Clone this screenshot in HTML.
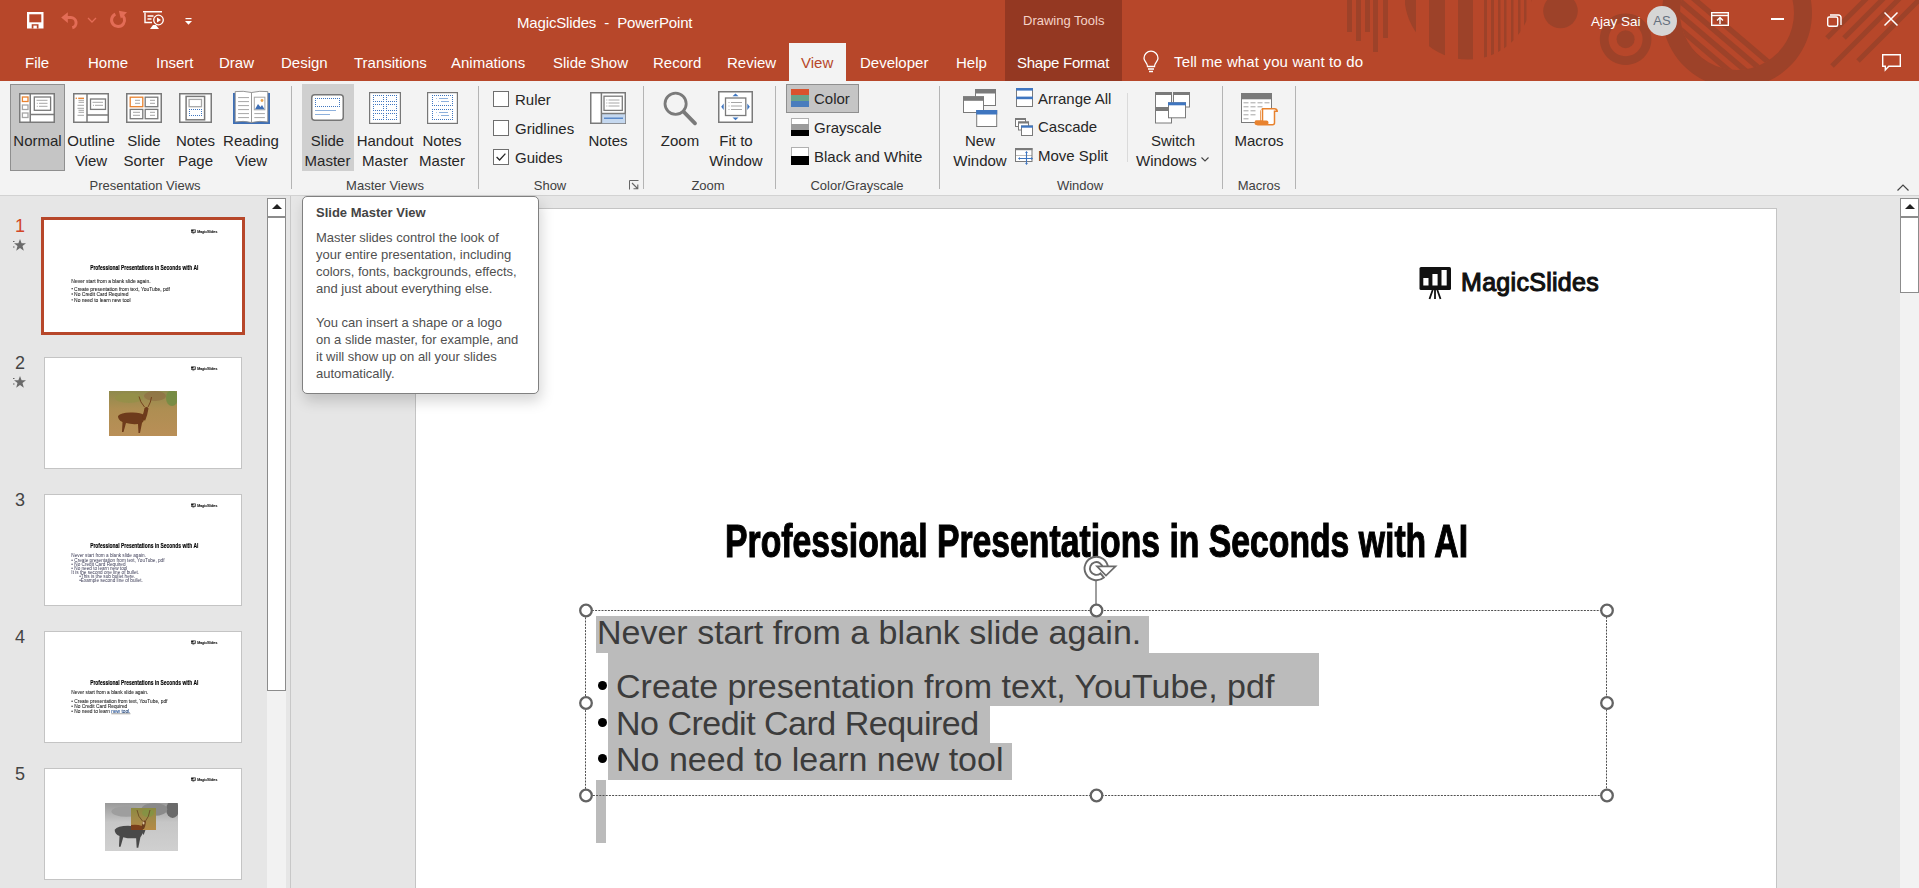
<!DOCTYPE html>
<html><head><meta charset="utf-8">
<style>
*{margin:0;padding:0;box-sizing:border-box}
html,body{width:1919px;height:888px;overflow:hidden;background:#E6E6E6;font-family:"Liberation Sans",sans-serif;position:relative}
.a{position:absolute;white-space:nowrap}
svg{position:absolute;overflow:visible}
#titlebar{position:absolute;left:0;top:0;width:1919px;height:81px;background:#B7472A;overflow:hidden}
.tt{color:#fff;font-size:15px}
.tab{position:absolute;top:53.5px;color:#fff;font-size:15px;white-space:nowrap}
#ribbon{position:absolute;left:0;top:81px;width:1919px;height:115px;background:#F3F3F3;border-bottom:1px solid #D2D2D2}
.rl{position:absolute;color:#262626;font-size:15px;white-space:nowrap;line-height:20px}
.gl{position:absolute;top:95px;color:#444;font-size:13px;white-space:nowrap}
.sep{position:absolute;top:5px;width:1px;height:103px;background:#C6C6C6}
.thumb{position:absolute;left:44px;width:198px;height:112px;background:#fff;border:1px solid #C4C4C4;overflow:hidden}
.num{position:absolute;font-size:18px;color:#444}
</style></head>
<body>
<!-- TITLEBAR -->
<div id="titlebar">
  <svg width="1919" height="81" style="left:0;top:0">
    <g fill="#9D4229">
      <rect x="1347" y="0" width="5" height="32"/>
      <rect x="1356" y="0" width="5" height="41"/>
      <rect x="1365" y="0" width="5" height="32"/>
      <rect x="1373" y="0" width="5" height="52"/>
      <rect x="1383" y="0" width="5" height="38"/>
      <clipPath id="cc"><circle cx="1468" cy="-4" r="63.5"/></clipPath>
      <g clip-path="url(#cc)">
        <rect x="1405" y="0" width="11" height="80"/>
        <rect x="1429" y="0" width="16" height="80"/>
        <rect x="1458" y="0" width="15" height="80"/>
        <rect x="1484" y="0" width="3" height="80"/>
        <rect x="1491" y="0" width="3" height="80"/>
        <rect x="1498" y="0" width="2.5" height="80"/>
        <rect x="1504" y="0" width="2.5" height="80"/>
        <rect x="1511" y="0" width="2.5" height="80"/>
        <rect x="1518" y="0" width="2.5" height="80"/>
        <rect x="1524" y="0" width="2.5" height="80"/>
        <rect x="1531" y="0" width="2.5" height="80"/>
      </g>
      <circle cx="1560.5" cy="11" r="17.3"/>
      <path d="M1625.6 13.4a25.8 25.8 0 1 0 0.01 0zM1625.6 22.2a17 17 0 1 1 -0.01 0z" fill-rule="evenodd"/>
      <circle cx="1625.6" cy="39.2" r="9"/>
      <path d="M1737 -62a75 75 0 1 0 0.01 0zM1737 -44a57 57 0 1 1 -0.01 0z" fill-rule="evenodd"/>
      <clipPath id="cc2"><circle cx="1737" cy="13" r="57"/></clipPath>
      <g clip-path="url(#cc2)" stroke="#9D4229" stroke-width="5.5">
        <line x1="1600" y1="-81" x2="1800" y2="89"/>
        <line x1="1600" y1="-67" x2="1800" y2="103"/>
        <line x1="1600" y1="-53" x2="1800" y2="117"/>
        <line x1="1600" y1="-39" x2="1800" y2="131"/>
        <line x1="1600" y1="-25" x2="1800" y2="145"/>
      </g>
      <g stroke="#9D4229" stroke-width="5">
        <line x1="1827" y1="38" x2="1880" y2="-15"/>
        <line x1="1844" y1="38" x2="1897" y2="-15"/>
        <line x1="1832" y1="66" x2="1930" y2="-32"/>
        <line x1="1858" y1="61" x2="1935" y2="-16"/>
      </g>
    </g>
  </svg>
  <!-- QAT -->
  <svg width="17" height="17" style="left:26.5px;top:11.5px" viewBox="0 0 17 17">
    <rect x="0" y="0" width="16.5" height="16.5" fill="#fff"/>
    <rect x="2.3" y="2.3" width="12" height="8" fill="#B7472A"/>
    <rect x="4.7" y="12.2" width="6.8" height="4.3" fill="#B7472A"/>
    <rect x="6.4" y="13.6" width="3.4" height="2.9" fill="#fff"/>
  </svg>
  <svg width="20" height="20" style="left:55px;top:5px;overflow:visible" viewBox="55 5 20 20">
    <path d="M61.2 17.6L67.8 12.2V23z" fill="#E36C56"/>
    <path d="M66 17.6H70.8A5.2 5.2 0 0 1 72.3 27.8" fill="none" stroke="#E36C56" stroke-width="3"/>
  </svg>
  <svg width="10" height="6" style="left:87px;top:17px" viewBox="0 0 10 6"><path d="M1 1l4 4l4-4" fill="none" stroke="#E36C56" stroke-width="1.3"/></svg>
  <svg width="20" height="20" style="left:105px;top:5px;overflow:visible" viewBox="105 5 20 20">
    <path d="M120.3 14A6.5 6.5 0 1 1 115.35 14.2" fill="none" stroke="#E36C56" stroke-width="3"/>
    <path d="M118.8 10.8L127 12.2L120.8 18.4z" fill="#E36C56"/>
  </svg>
  <svg width="22" height="20" style="left:143px;top:11px" viewBox="0 0 22 20">
    <rect x="0" y="0" width="19" height="1.5" fill="#fff"/>
    <path d="M2 1.5v10h7" fill="none" stroke="#fff" stroke-width="1.4"/>
    <path d="M4.5 5h6M4.5 8h4" stroke="#fff" stroke-width="1.3"/>
    <circle cx="15.5" cy="9" r="4.8" fill="none" stroke="#fff" stroke-width="1.3"/>
    <path d="M14 6.5v5l4-2.5z" fill="#fff"/>
    <path d="M7 18l3-4h3l3 4z" fill="#fff"/>
  </svg>
  <svg width="8" height="8" style="left:185px;top:18px" viewBox="0 0 8 8"><rect x="0.5" y="0" width="6" height="1.2" fill="#fff"/><path d="M0 3h7l-3.5 3.8z" fill="#fff"/></svg>

  <div class="a tt" style="left:517px;top:14px;letter-spacing:-0.15px">MagicSlides&nbsp; -&nbsp; PowerPoint</div>
  <div class="tab" style="left:25px">File</div>
  <div class="tab" style="left:88px">Home</div>
  <div class="tab" style="left:156px">Insert</div>
  <div class="tab" style="left:219px">Draw</div>
  <div class="tab" style="left:281px">Design</div>
  <div class="tab" style="left:354px">Transitions</div>
  <div class="tab" style="left:451px">Animations</div>
  <div class="tab" style="left:553px">Slide Show</div>
  <div class="tab" style="left:653px">Record</div>
  <div class="tab" style="left:727px">Review</div>
  <div class="a" style="left:789px;top:43px;width:57px;height:38px;background:#F3F3F3"></div>
  <div class="tab" style="left:801px;color:#B7472A">View</div>
  <div class="tab" style="left:860px">Developer</div>
  <div class="tab" style="left:956px">Help</div>
  <div class="a" style="left:1005px;top:0;width:117px;height:81px;background:#943822"></div>
  <div class="a tt" style="left:1023px;top:13px;font-size:13px;color:#F5D3C8">Drawing Tools</div>
  <div class="tab" style="left:1017px;letter-spacing:-0.25px">Shape Format</div>
  <svg width="16" height="21" style="left:1143px;top:52px" viewBox="0 0 16 21">
    <path d="M4.5 14.5C4.5 11 1 9.5 1 6.2A6.8 6.8 0 0 1 15 6.2C15 9.5 11.5 11 11.5 14.5z" fill="none" stroke="#fff" stroke-width="1.3"/>
    <path d="M5 17h6M6 19.5h4" stroke="#fff" stroke-width="1.3"/>
  </svg>
  <div class="tab" style="left:1174px;top:52.5px;letter-spacing:0.15px">Tell me what you want to do</div>
  <div class="a tt" style="left:1591px;top:14px;font-size:13.5px">Ajay Sai</div>
  <div class="a" style="left:1647px;top:6px;width:30px;height:30px;border-radius:50%;background:#D6D6D6;color:#65707E;font-size:13px;line-height:30px;text-align:center">AS</div>
  <svg width="18" height="14" style="left:1711px;top:12px" viewBox="0 0 18 14">
    <rect x="0.7" y="0.7" width="16.6" height="12.6" fill="none" stroke="#fff" stroke-width="1.4"/>
    <path d="M0.7 3.5h16.6" stroke="#fff" stroke-width="1.4"/>
    <path d="M9 12V6M6 8.5l3-3l3 3" fill="none" stroke="#fff" stroke-width="1.4"/>
  </svg>
  <div class="a" style="left:1771px;top:18px;width:13px;height:1.5px;background:#fff"></div>
  <svg width="15" height="13" style="left:1827px;top:14px" viewBox="0 0 15 13">
    <rect x="0.7" y="3" width="10" height="9.3" rx="1.5" fill="none" stroke="#fff" stroke-width="1.4"/>
    <path d="M3 1h8.5a2.5 2.5 0 0 1 2.5 2.5v7.5" fill="none" stroke="#fff" stroke-width="1.4"/>
  </svg>
  <svg width="14" height="14" style="left:1884px;top:12px" viewBox="0 0 14 14"><path d="M0.5 0.5l13 13M13.5 0.5l-13 13" stroke="#fff" stroke-width="1.5"/></svg>
  <svg width="19" height="17" style="left:1882px;top:54px" viewBox="0 0 19 17">
    <path d="M0.7 0.7h17.6v11.5h-11.5l-3.5 3.8v-3.8h-2.6z" fill="none" stroke="#fff" stroke-width="1.4"/>
  </svg>
</div>

<!-- RIBBON -->
<div id="ribbon"></div>
<div id="rib" style="position:absolute;left:0;top:0;width:1919px;height:196px">
<style>
.L{position:absolute;color:#262626;font-size:15px;line-height:20px;white-space:nowrap;text-align:center}
.S{position:absolute;color:#262626;font-size:15px;line-height:20px;white-space:nowrap}
.G{position:absolute;color:#404040;font-size:13px;line-height:16px;white-space:nowrap;text-align:center;top:178px}
.V{position:absolute;top:86px;width:1px;height:103px;background:#B4B4B4}
</style>
<!-- Presentation Views -->
<div class="a" style="left:10px;top:84px;width:55px;height:87px;background:#C5C5C5;border:1px solid #8F8F8F"></div>
<svg width="36" height="30" style="left:19px;top:93px" viewBox="0 0 36 30">
  <rect x="0.75" y="0.75" width="34.5" height="28.5" fill="#fff" stroke="#7A7A7A" stroke-width="1.5"/>
  <path d="M11.25 0.75V29.25M11.25 21.4H35.25" stroke="#7A7A7A" stroke-width="1.5"/>
  <rect x="3.4" y="4" width="5.6" height="4.5" fill="none" stroke="#E8822E" stroke-width="1.3"/>
  <rect x="3.4" y="12" width="5.6" height="4.5" fill="none" stroke="#A6A6A6" stroke-width="1.3"/>
  <rect x="3.4" y="20" width="5.6" height="4.5" fill="none" stroke="#A6A6A6" stroke-width="1.3"/>
  <rect x="15.3" y="4" width="16.3" height="13.3" fill="none" stroke="#7A7A7A" stroke-width="1.3"/>
  <path d="M17.5 7.3H28.5M20 10.3H28.5M20 13.3H28.5M17.8 10.3h1M17.8 13.3h1" stroke="#A6A6A6" stroke-width="1"/>
</svg>
<div class="L" style="left:10px;top:131px;width:55px">Normal</div>

<svg width="36" height="30" style="left:73px;top:93px" viewBox="0 0 36 30">
  <rect x="0.75" y="0.75" width="34.5" height="28.5" fill="#fff" stroke="#7A7A7A" stroke-width="1.5"/>
  <path d="M14 0.75V29.25M14 22H35.25" stroke="#7A7A7A" stroke-width="1.5"/>
  <path d="M5.2 5.3h5.8" stroke="#E8822E" stroke-width="1.3"/><circle cx="3.3" cy="5.3" r="0.8" fill="#E8822E"/>
  <path d="M5.5 7.3h5.5M5.5 9.3h5.5M4.5 12.3h6.5M4.5 15.3h6.5M5.5 17.3h5.5M5.5 19.3h5.5M4.5 22.3h6.5" stroke="#A6A6A6" stroke-width="1"/>
  <rect x="17.5" y="6" width="15" height="10.4" fill="none" stroke="#7A7A7A" stroke-width="1.3"/>
  <path d="M19.5 9.3H30M22 12.3H30M20 12.3h1" stroke="#A6A6A6" stroke-width="1"/>
</svg>
<div class="L" style="left:64px;top:131px;width:54px">Outline<br>View</div>

<svg width="36" height="30" style="left:126px;top:93px" viewBox="0 0 36 30">
  <rect x="0.75" y="0.75" width="34.5" height="28.5" fill="#fff" stroke="#7A7A7A" stroke-width="1.5"/>
  <rect x="4.2" y="4.2" width="12.6" height="9.5" fill="none" stroke="#E8822E" stroke-width="1.3"/>
  <rect x="19.2" y="4.2" width="12.6" height="9.5" fill="none" stroke="#7A7A7A" stroke-width="1.3"/>
  <rect x="4.2" y="16.4" width="12.6" height="9.3" fill="none" stroke="#7A7A7A" stroke-width="1.3"/>
  <rect x="19.2" y="16.4" width="12.6" height="9.3" fill="none" stroke="#7A7A7A" stroke-width="1.3"/>
  <path d="M9 7.3h5M9 10.3h5M24 7.3h5M24 10.3h5M7 19.3h7M7 22.3h7M24 19.3h5M24 22.3h5" stroke="#A6A6A6" stroke-width="1"/>
</svg>
<div class="L" style="left:117px;top:131px;width:54px">Slide<br>Sorter</div>

<svg width="33" height="30" style="left:179px;top:93px" viewBox="0 0 33 30">
  <rect x="0.75" y="0.75" width="31.5" height="28.5" fill="#fff" stroke="#7A7A7A" stroke-width="1.5"/>
  <rect x="7.1" y="3.4" width="18.5" height="23.4" fill="none" stroke="#7A7A7A" stroke-width="1.5"/>
  <rect x="10.1" y="6.4" width="12.4" height="7.3" fill="none" stroke="#A6A6A6" stroke-width="1.3"/>
  <path d="M10 16h1v1h-1zM10 18h1v1h-1zM10 20h1v1h-1zM10 22h1v1h-1zM12 16h1v1h-1zM12 22h1v1h-1zM14 16h1v1h-1zM14 22h1v1h-1zM16 16h1v1h-1zM16 22h1v1h-1zM18 16h1v1h-1zM18 22h1v1h-1zM20 16h1v1h-1zM20 22h1v1h-1zM22 16h1v1h-1zM22 18h1v1h-1zM22 20h1v1h-1zM22 22h1v1h-1z" fill="#3F76C0"/>
</svg>
<div class="L" style="left:168px;top:131px;width:55px">Notes<br>Page</div>

<svg width="37" height="33" style="left:233px;top:91px" viewBox="0 0 37 33">
  <rect x="0" y="2" width="37" height="31" fill="#3E6FB6"/>
  <path d="M2.2 0.6Q10 -0.4 18.5 1.5Q27 -0.4 34.8 0.6V31Q27 29.5 18.5 31.5Q10 29.5 2.2 31z" fill="#fff" stroke="#8A8A8A" stroke-width="0.9"/>
  <path d="M18.5 1.5V31.5" stroke="#8A8A8A" stroke-width="0.9"/>
  <path d="M5.1 6.6H16M5.1 10.6H16M5.1 14.6H16M5.1 18.6H16M5.1 22.6H16M5.1 26.6H16M21.3 22.6H31.9M21.3 26.6H31.9" stroke="#A6A6A6" stroke-width="1"/>
  <rect x="21.3" y="6.2" width="10.6" height="12.6" fill="#fff" stroke="#A6A6A6" stroke-width="1"/>
  <path d="M22 18.3L25 13L27.5 16L29 14L31.5 18.3z" fill="#3E6FB6"/>
  <circle cx="29" cy="9.5" r="1.4" fill="#E9A24A"/>
</svg>
<div class="L" style="left:221px;top:131px;width:60px">Reading<br>View</div>
<div class="G" style="left:70px;width:150px">Presentation Views</div>
<div class="V" style="left:291px"></div>

<!-- Master Views -->
<div class="a" style="left:302px;top:84px;width:52px;height:87px;background:#CFCFCF"></div>
<svg width="33" height="27" style="left:311px;top:94px" viewBox="0 0 33 27">
  <rect x="0.75" y="0.75" width="31.5" height="25.5" rx="3" fill="#fff" stroke="#777" stroke-width="1.5"/>
  <path d="M4 4h1v1h-1zM4 6h1v1h-1zM4 8h1v1h-1zM4 10h1v1h-1zM4 12h1v1h-1zM6 4h1v1h-1zM6 12h1v1h-1zM8 4h1v1h-1zM8 12h1v1h-1zM10 4h1v1h-1zM10 12h1v1h-1zM12 4h1v1h-1zM12 12h1v1h-1zM14 4h1v1h-1zM14 12h1v1h-1zM16 4h1v1h-1zM16 12h1v1h-1zM18 4h1v1h-1zM18 12h1v1h-1zM20 4h1v1h-1zM20 12h1v1h-1zM22 4h1v1h-1zM22 12h1v1h-1zM24 4h1v1h-1zM24 12h1v1h-1zM26 4h1v1h-1zM26 12h1v1h-1zM28 4h1v1h-1zM28 6h1v1h-1zM28 8h1v1h-1zM28 10h1v1h-1zM28 12h1v1h-1z" fill="#3F76C0"/>
  <path d="M4 16.5H25M4 20.5H19" stroke="#8DB0DC" stroke-width="1"/>
</svg>
<div class="L" style="left:300px;top:131px;width:55px">Slide<br>Master</div>
<svg width="32" height="32" style="left:369px;top:92px" viewBox="0 0 32 32">
  <rect x="0.6" y="0.6" width="30.8" height="30.8" fill="#fff" stroke="#777" stroke-width="1.2"/>
  <path d="M4 3h1v1h-1zM4 5h1v1h-1zM4 7h1v1h-1zM4 9h1v1h-1zM6 3h1v1h-1zM6 9h1v1h-1zM8 3h1v1h-1zM8 9h1v1h-1zM10 3h1v1h-1zM10 9h1v1h-1zM12 3h1v1h-1zM12 9h1v1h-1zM14 3h1v1h-1zM14 5h1v1h-1zM14 7h1v1h-1zM14 9h1v1h-1zM4 12h1v1h-1zM4 14h1v1h-1zM4 16h1v1h-1zM4 18h1v1h-1zM6 12h1v1h-1zM6 18h1v1h-1zM8 12h1v1h-1zM8 18h1v1h-1zM10 12h1v1h-1zM10 18h1v1h-1zM12 12h1v1h-1zM12 18h1v1h-1zM14 12h1v1h-1zM14 14h1v1h-1zM14 16h1v1h-1zM14 18h1v1h-1zM4 21h1v1h-1zM4 23h1v1h-1zM4 25h1v1h-1zM4 27h1v1h-1zM6 21h1v1h-1zM6 27h1v1h-1zM8 21h1v1h-1zM8 27h1v1h-1zM10 21h1v1h-1zM10 27h1v1h-1zM12 21h1v1h-1zM12 27h1v1h-1zM14 21h1v1h-1zM14 23h1v1h-1zM14 25h1v1h-1zM14 27h1v1h-1zM17 3h1v1h-1zM17 5h1v1h-1zM17 7h1v1h-1zM17 9h1v1h-1zM19 3h1v1h-1zM19 9h1v1h-1zM21 3h1v1h-1zM21 9h1v1h-1zM23 3h1v1h-1zM23 9h1v1h-1zM25 3h1v1h-1zM25 9h1v1h-1zM27 3h1v1h-1zM27 5h1v1h-1zM27 7h1v1h-1zM27 9h1v1h-1zM17 12h1v1h-1zM17 14h1v1h-1zM17 16h1v1h-1zM17 18h1v1h-1zM19 12h1v1h-1zM19 18h1v1h-1zM21 12h1v1h-1zM21 18h1v1h-1zM23 12h1v1h-1zM23 18h1v1h-1zM25 12h1v1h-1zM25 18h1v1h-1zM27 12h1v1h-1zM27 14h1v1h-1zM27 16h1v1h-1zM27 18h1v1h-1zM17 21h1v1h-1zM17 23h1v1h-1zM17 25h1v1h-1zM17 27h1v1h-1zM19 21h1v1h-1zM19 27h1v1h-1zM21 21h1v1h-1zM21 27h1v1h-1zM23 21h1v1h-1zM23 27h1v1h-1zM25 21h1v1h-1zM25 27h1v1h-1zM27 21h1v1h-1zM27 23h1v1h-1zM27 25h1v1h-1zM27 27h1v1h-1z" fill="#3F76C0"/>
</svg>
<div class="L" style="left:355px;top:131px;width:60px">Handout<br>Master</div>
<svg width="31" height="32" style="left:427px;top:92px" viewBox="0 0 31 32">
  <rect x="0.6" y="0.6" width="29.8" height="30.8" fill="#fff" stroke="#777" stroke-width="1.2"/>
  <path d="M5 3h1v1h-1zM5 5h1v1h-1zM5 7h1v1h-1zM5 9h1v1h-1zM5 11h1v1h-1zM5 13h1v1h-1zM7 3h1v1h-1zM7 13h1v1h-1zM9 3h1v1h-1zM9 13h1v1h-1zM11 3h1v1h-1zM11 13h1v1h-1zM13 3h1v1h-1zM13 13h1v1h-1zM15 3h1v1h-1zM15 13h1v1h-1zM17 3h1v1h-1zM17 13h1v1h-1zM19 3h1v1h-1zM19 13h1v1h-1zM21 3h1v1h-1zM21 13h1v1h-1zM23 3h1v1h-1zM23 13h1v1h-1zM25 3h1v1h-1zM25 5h1v1h-1zM25 7h1v1h-1zM25 9h1v1h-1zM25 11h1v1h-1zM25 13h1v1h-1zM5 17h1v1h-1zM5 19h1v1h-1zM5 21h1v1h-1zM5 23h1v1h-1zM5 25h1v1h-1zM5 27h1v1h-1zM7 17h1v1h-1zM7 27h1v1h-1zM9 17h1v1h-1zM9 27h1v1h-1zM11 17h1v1h-1zM11 27h1v1h-1zM13 17h1v1h-1zM13 27h1v1h-1zM15 17h1v1h-1zM15 27h1v1h-1zM17 17h1v1h-1zM17 27h1v1h-1zM19 17h1v1h-1zM19 27h1v1h-1zM21 17h1v1h-1zM21 27h1v1h-1zM23 17h1v1h-1zM23 27h1v1h-1zM25 17h1v1h-1zM25 19h1v1h-1zM25 21h1v1h-1zM25 23h1v1h-1zM25 25h1v1h-1zM25 27h1v1h-1z" fill="#3F76C0"/>
  <path d="M12 6.5H21M14 9.5H22M12 20.5H21M14 23.5H22" stroke="#8DB0DC" stroke-width="1"/>
  <path d="M9 6.5h1M11 9.5h1M9 20.5h1M11 23.5h1" stroke="#B0C8E8" stroke-width="1"/>
</svg>
<div class="L" style="left:412px;top:131px;width:60px">Notes<br>Master</div>
<div class="G" style="left:325px;width:120px">Master Views</div>
<div class="V" style="left:478px"></div>

<!-- Show -->
<div class="a" style="left:493px;top:91px;width:16px;height:16px;background:#fff;border:1px solid #6E6E6E"></div>
<div class="a" style="left:493px;top:120px;width:16px;height:16px;background:#fff;border:1px solid #6E6E6E"></div>
<div class="a" style="left:493px;top:149px;width:16px;height:16px;background:#fff;border:1px solid #6E6E6E"></div>
<svg width="10" height="8" style="left:496px;top:153px" viewBox="0 0 10 8"><path d="M0.6 4l3 3l5.8-6.4" fill="none" stroke="#262626" stroke-width="1.3"/></svg>
<div class="S" style="left:515px;top:90px">Ruler</div>
<div class="S" style="left:515px;top:119px">Gridlines</div>
<div class="S" style="left:515px;top:148px">Guides</div>
<svg width="36" height="32" style="left:590px;top:92px" viewBox="0 0 36 32">
  <rect x="0.75" y="0.75" width="34.5" height="30.5" fill="#fff" stroke="#7A7A7A" stroke-width="1.5"/>
  <rect x="11.4" y="21.5" width="23.85" height="9.75" fill="#C5D8EF"/>
  <path d="M11.4 0.75V31.25M11.4 21.5H35.25" stroke="#7A7A7A" stroke-width="1.5"/>
  <rect x="14" y="4.2" width="18.3" height="14.2" fill="none" stroke="#7A7A7A" stroke-width="1.3"/>
  <path d="M18.5 8H29.5M18.5 11H29.5M18.5 14H29.5M16.3 8h1M16.3 11h1M16.3 14h1" stroke="#A6A6A6" stroke-width="1"/>
  <path d="M14 26.2H33" stroke="#3F76C0" stroke-width="1.2"/>
</svg>
<div class="L" style="left:578px;top:131px;width:60px">Notes</div>
<div class="G" style="left:520px;width:60px">Show</div>
<svg width="10" height="10" style="left:629px;top:180px" viewBox="0 0 10 10"><path d="M0.5 9.5V0.5H9.5" fill="none" stroke="#666" stroke-width="1"/><path d="M3 3l5.5 5.5M4.5 8.8H8.8V4.5" fill="none" stroke="#666" stroke-width="1.1"/></svg>
<div class="V" style="left:643px"></div>

<!-- Zoom -->
<svg width="34" height="34" style="left:663px;top:91px" viewBox="0 0 34 34">
  <circle cx="12.6" cy="12.8" r="10.6" fill="none" stroke="#7A7A7A" stroke-width="2.8"/>
  <path d="M20.5 20.7L32 32.3" stroke="#7A7A7A" stroke-width="3.8" stroke-linecap="round"/>
</svg>
<div class="L" style="left:650px;top:131px;width:60px">Zoom</div>
<svg width="35" height="32" style="left:718px;top:91px" viewBox="0 0 35 32">
  <rect x="0.75" y="0.75" width="33.5" height="30.5" fill="#fff" stroke="#7A7A7A" stroke-width="1.5"/>
  <rect x="7.5" y="7" width="20.3" height="17.5" fill="none" stroke="#7A7A7A" stroke-width="1.3"/>
  <path d="M13 11.5h11M13 15h11M13 18.5h11M10.5 11.5h1M10.5 15h1M10.5 18.5h1" stroke="#A6A6A6" stroke-width="1"/>
  <path d="M14.5 5.3L17.5 2.6L20.5 5.3zM14.5 26.6L17.5 29.3L20.5 26.6zM5.7 12.5L3.2 15.7L5.7 18.9zM29.3 12.5L31.8 15.7L29.3 18.9z" fill="#3F76C0"/>
</svg>
<div class="L" style="left:705px;top:131px;width:62px">Fit to<br>Window</div>
<div class="G" style="left:678px;width:60px">Zoom</div>
<div class="V" style="left:775px"></div>

<!-- Color/Grayscale -->
<div class="a" style="left:786px;top:84px;width:73px;height:29px;background:#C5C5C5;border:1px solid #8F8F8F"></div>
<svg width="18" height="18" style="left:791px;top:89px" viewBox="0 0 18 18">
  <rect x="0" y="0" width="18" height="6" fill="#D9532E"/><rect x="0" y="6" width="18" height="6" fill="#68A38B"/><rect x="0" y="12" width="18" height="6" fill="#4A7DBD"/>
</svg>
<svg width="18" height="18" style="left:791px;top:118px" viewBox="0 0 18 18">
  <rect x="0.5" y="0.5" width="17" height="17" fill="#fff" stroke="#B0B0B0" stroke-width="1"/><rect x="0" y="6" width="18" height="6" fill="#9B9B9B"/><rect x="0" y="12" width="18" height="6" fill="#000"/>
</svg>
<svg width="18" height="18" style="left:791px;top:147px" viewBox="0 0 18 18">
  <rect x="0.5" y="0.5" width="17" height="17" fill="#fff" stroke="#B0B0B0" stroke-width="1"/><rect x="0" y="9" width="18" height="9" fill="#000"/>
</svg>
<div class="S" style="left:814px;top:89px">Color</div>
<div class="S" style="left:814px;top:118px">Grayscale</div>
<div class="S" style="left:814px;top:147px">Black and White</div>
<div class="G" style="left:797px;width:120px">Color/Grayscale</div>
<div class="V" style="left:939px"></div>

<!-- Window -->
<svg width="35" height="38" style="left:963px;top:89px" viewBox="0 0 35 38">
  <rect x="12.5" y="0.5" width="20" height="16" fill="#fff" stroke="#7A7A7A" stroke-width="1"/><rect x="12" y="0" width="21" height="4.5" fill="#7A7A7A"/>
  <rect x="0.5" y="7.8" width="20" height="15.7" fill="#fff" stroke="#7A7A7A" stroke-width="1"/><rect x="0" y="7.3" width="21" height="4.5" fill="#7A7A7A"/>
  <rect x="13.7" y="21.5" width="20" height="16" fill="#fff" stroke="#7A7A7A" stroke-width="1"/><rect x="13.2" y="21" width="21" height="4.5" fill="#3F76C0"/>
</svg>
<div class="L" style="left:948px;top:131px;width:64px">New<br>Window</div>
<svg width="17" height="19" style="left:1016px;top:88px" viewBox="0 0 17 19">
  <rect x="0.5" y="0.5" width="16" height="18" fill="#fff" stroke="#7A7A7A" stroke-width="1"/>
  <rect x="0" y="0" width="17" height="2.6" fill="#3F76C0"/><rect x="0" y="8.6" width="17" height="2.6" fill="#3F76C0"/>
</svg>
<svg width="18" height="18" style="left:1015px;top:118px" viewBox="0 0 18 18">
  <rect x="0.5" y="0.5" width="10" height="8" fill="#fff" stroke="#7A7A7A" stroke-width="1"/><rect x="0" y="0" width="11" height="2" fill="#7A7A7A"/>
  <rect x="3.5" y="4" width="10" height="8" fill="#fff" stroke="#7A7A7A" stroke-width="1"/><rect x="3" y="3.5" width="11" height="2" fill="#7A7A7A"/>
  <rect x="6.5" y="8" width="11" height="9.5" fill="#fff" stroke="#7A7A7A" stroke-width="1"/><rect x="6" y="7.5" width="12" height="2.2" fill="#3F76C0"/>
</svg>
<svg width="18" height="18" style="left:1015px;top:148px" viewBox="0 0 18 18">
  <rect x="0.5" y="0.5" width="16.5" height="13" fill="#fff" stroke="#7A7A7A" stroke-width="1"/><rect x="0" y="0" width="17.5" height="2.2" fill="#7A7A7A"/>
  <path d="M1.5 7.5h15" stroke="#7A7A7A" stroke-width="1" stroke-dasharray="1 1"/>
  <path d="M11.5 3.5v13M3.5 10.5h14" stroke="#3F76C0" stroke-width="1.1"/>
  <path d="M10 5l1.5-1.8L13 5zM10 15l1.5 1.8L13 15zM5 9l-1.8 1.5L5 12zM16 9l1.8 1.5L16 12z" fill="#3F76C0"/>
</svg>
<div class="S" style="left:1038px;top:89px">Arrange All</div>
<div class="S" style="left:1038px;top:117px">Cascade</div>
<div class="S" style="left:1038px;top:146px">Move Split</div>
<div class="a" style="left:1127px;top:93px;width:1px;height:69px;background:#DADADA"></div>
<svg width="36" height="32" style="left:1155px;top:92px" viewBox="0 0 36 32">
  <rect x="0.5" y="0.5" width="16" height="15" fill="#fff" stroke="#7A7A7A" stroke-width="1"/><rect x="0" y="0" width="17" height="3" fill="#7A7A7A"/>
  <rect x="18.5" y="0.5" width="16" height="14.5" fill="#fff" stroke="#7A7A7A" stroke-width="1"/><rect x="18" y="0" width="17" height="3" fill="#7A7A7A"/>
  <rect x="0.5" y="16.5" width="16" height="14.5" fill="#fff" stroke="#7A7A7A" stroke-width="1"/><rect x="0" y="16" width="17" height="3" fill="#7A7A7A"/>
  <rect x="13.5" y="10.8" width="17" height="15" fill="#fff" stroke="#7A7A7A" stroke-width="1"/><rect x="13" y="10.3" width="18" height="3" fill="#3F76C0"/>
</svg>
<div class="S" style="left:1151px;top:131px">Switch</div><div class="S" style="left:1136px;top:151px">Windows</div>
<svg width="8" height="5" style="left:1201px;top:157px" viewBox="0 0 8 5"><path d="M0.5 0.5l3.5 3.5l3.5-3.5" fill="none" stroke="#444" stroke-width="1.1"/></svg>
<div class="G" style="left:1030px;width:100px">Window</div>
<div class="V" style="left:1222px"></div>

<!-- Macros -->
<svg width="37" height="34" style="left:1241px;top:93px" viewBox="0 0 37 34">
  <rect x="0.5" y="0.5" width="30" height="29" fill="#fff" stroke="#7A7A7A" stroke-width="1"/>
  <rect x="0" y="0" width="31" height="6.3" fill="#7A7A7A"/>
  <path d="M2.5 9.8h5M9.5 9.8h5M16.5 9.8h5M23.5 9.8h5M2.5 13.8h5M9.5 13.8h5M16.5 13.8h5M2.5 17.8h5M9.5 17.8h5M2.5 21.8h5M9.5 21.8h5M2.5 25.8h5" stroke="#A6A6A6" stroke-width="1"/>
  <path d="M22 16.5h11.5q2.5 0 2.5 2.5M22 16.5q-2 0-2 2.5v10" fill="none" stroke="#E8822E" stroke-width="1.5"/>
  <path d="M20 16.5h13v13h-13z" fill="#fff"/>
  <path d="M21.5 15.8h12q2.5 0 2.5 2.5h-2.5v11.5q0 2-2 2H17q-2 0-2-2v-1.5h6.5z" fill="#fff" stroke="#E8822E" stroke-width="1.5"/>
  <rect x="13.5" y="27.5" width="14" height="4.5" rx="2" fill="#E8822E"/>
</svg>
<div class="L" style="left:1229px;top:131px;width:60px">Macros</div>
<div class="G" style="left:1229px;width:60px">Macros</div>
<div class="V" style="left:1295px"></div>
<svg width="12" height="7" style="left:1897px;top:184px" viewBox="0 0 12 7"><path d="M0.5 6.5L6 1L11.5 6.5" fill="none" stroke="#444" stroke-width="1.2"/></svg>
</div>


<!-- LEFT PANE -->
<div id="leftpane" style="position:absolute;left:0;top:196px;width:290px;height:692px;background:#E6E6E6"></div>
<div class="a" style="left:290px;top:196px;width:1px;height:692px;background:#C8C8C8"></div>
<div class="a" style="left:291px;top:196px;width:1628px;height:692px;background:#E6E6E6"></div>
<style>
.num{position:absolute;font-size:18px;line-height:20px;color:#444;text-align:center;width:20px}
.star{position:absolute;left:13px;width:13px;height:12px}
.sc{position:absolute;left:0;top:0;width:1360px;height:765px;transform-origin:0 0;transform:scale(0.14559);background:#fff}
.logo{position:absolute;left:1003px;top:57px;width:190px;height:34px}
.logo .ic{position:absolute;left:0;top:0}
.logo .tx{position:absolute;left:42px;top:1px;font-size:25px;font-weight:normal;color:#111;line-height:30px;letter-spacing:0.3px;-webkit-text-stroke:1.1px #111}
.ttl{position:absolute;left:310px;top:304px;font-size:46px;font-weight:bold;color:#000;line-height:56px;transform-origin:0 0;transform:scaleX(0.7335);white-space:nowrap;-webkit-text-stroke:1.1px #000}
.bt{position:absolute;font-size:34px;color:#3C3C3C;line-height:40px;white-space:nowrap;letter-spacing:0px}
.bul{position:absolute;width:9px;height:9px;border-radius:50%;background:#000}
</style>
<div class="num" style="left:10px;top:216px;color:#D24726">1</div>
<div class="num" style="left:10px;top:353px">2</div>
<div class="num" style="left:10px;top:490px">3</div>
<div class="num" style="left:10px;top:627px">4</div>
<div class="num" style="left:10px;top:764px">5</div>
<svg class="star" style="top:239px" viewBox="0 0 13 12"><path d="M7 0l1.6 4.2h4.4l-3.5 2.8l1.3 4.8L7 9l-3.8 2.8l1.3-4.8L1 4.2h4.4z" fill="#6A6A6A"/><path d="M0 2.5h1.5M0 8h1.5" stroke="#555" stroke-width="0.9"/></svg>
<svg class="star" style="top:376px" viewBox="0 0 13 12"><path d="M7 0l1.6 4.2h4.4l-3.5 2.8l1.3 4.8L7 9l-3.8 2.8l1.3-4.8L1 4.2h4.4z" fill="#6A6A6A"/><path d="M0 2.5h1.5M0 8h1.5" stroke="#555" stroke-width="0.9"/></svg>

<!-- thumbs -->
<div class="a" style="left:41px;top:217px;width:204px;height:118px;border:3px solid #B7472A;background:#fff"></div>
<div class="thumb" style="top:220px;border-color:#fff" id="t1"><div class="sc"><div class="logo"><svg class="ic" width="33" height="34" viewBox="0 0 33 34"><rect x="0.5" y="1" width="31.5" height="23" rx="1.5" fill="#111"/><rect x="4.3" y="12" width="5.2" height="7.5" fill="#fff"/><rect x="13.4" y="8" width="5.2" height="11.5" fill="#fff"/><rect x="22.5" y="4" width="5.2" height="15.5" fill="#fff"/><path d="M14 23l-3.5 10M16 23v10M18 23l3.5 10" stroke="#111" stroke-width="1.8"/></svg><div class="tx">MagicSlides</div></div><div class="ttl" style="top:295px">Professional Presentations in Seconds with AI</div>
<div class="bt" style="left:181px;top:393px;color:#2A2A2A;-webkit-text-stroke:0.6px #2A2A2A">Never start from a blank slide again.</div>
<div class="bul" style="left:182px;top:460px"></div><div class="bul" style="left:182px;top:497px"></div><div class="bul" style="left:182px;top:537px"></div>
<div class="bt" style="left:200px;top:447px;color:#2A2A2A;-webkit-text-stroke:0.6px #2A2A2A">Create presentation from text, YouTube, pdf</div>
<div class="bt" style="left:200px;top:484px;color:#2A2A2A;-webkit-text-stroke:0.6px #2A2A2A">No Credit Card Required</div>
<div class="bt" style="left:200px;top:524px;color:#2A2A2A;-webkit-text-stroke:0.6px #2A2A2A">No need to learn new tool</div></div></div>
<div class="thumb" style="top:357px" id="t2"><div class="sc"><div class="logo"><svg class="ic" width="33" height="34" viewBox="0 0 33 34"><rect x="0.5" y="1" width="31.5" height="23" rx="1.5" fill="#111"/><rect x="4.3" y="12" width="5.2" height="7.5" fill="#fff"/><rect x="13.4" y="8" width="5.2" height="11.5" fill="#fff"/><rect x="22.5" y="4" width="5.2" height="15.5" fill="#fff"/><path d="M14 23l-3.5 10M16 23v10M18 23l3.5 10" stroke="#111" stroke-width="1.8"/></svg><div class="tx">MagicSlides</div></div></div><svg width="68" height="45" viewBox="0 0 68 45" style="left:64px;top:33px" preserveAspectRatio="none">
<defs><linearGradient id="dg2" x1="0" y1="0" x2="0" y2="1"><stop offset="0" stop-color="#8E8A4C"/><stop offset="0.4" stop-color="#AE8E52"/><stop offset="1" stop-color="#B98F57"/></linearGradient>
<filter id="bl2" x="0" y="0" width="1" height="1"><feGaussianBlur stdDeviation="0.7"/></filter><clipPath id="cl2"><rect width="68" height="45"/></clipPath></defs>
<g clip-path="url(#cl2)"><rect width="68" height="45" fill="url(#dg2)"/>
<g filter="url(#bl2)">
<ellipse cx="63" cy="7" rx="6" ry="8" fill="#728C42" opacity="0.85"/>
<ellipse cx="46" cy="5" rx="11" ry="5" fill="#8F6E42" opacity="0.7"/>
<ellipse cx="20" cy="7" rx="14" ry="5" fill="#939049" opacity="0.8"/>
<path d="M9 25Q12 21 24 21.5Q32 21.5 35 24Q36 29 33 32L31 42H29.5L29 33Q22 33.5 17 32L14.5 41H13L13.5 31Q9 29 9 25z" fill="#6E3A1A"/>
<path d="M33 26Q35 21 35.5 17Q38 15 39.5 17.5Q38.5 24 36 30z" fill="#6E3A1A"/>
<path d="M35.5 16Q31 11 30 5.5M39 16Q42 11 42.5 6" stroke="#6E3A1A" stroke-width="0.9" fill="none"/>
</g></g></svg></div>
<div class="thumb" style="top:494px" id="t3"><div class="sc"><div class="logo"><svg class="ic" width="33" height="34" viewBox="0 0 33 34"><rect x="0.5" y="1" width="31.5" height="23" rx="1.5" fill="#111"/><rect x="4.3" y="12" width="5.2" height="7.5" fill="#fff"/><rect x="13.4" y="8" width="5.2" height="11.5" fill="#fff"/><rect x="22.5" y="4" width="5.2" height="15.5" fill="#fff"/><path d="M14 23l-3.5 10M16 23v10M18 23l3.5 10" stroke="#111" stroke-width="1.8"/></svg><div class="tx">MagicSlides</div></div><div class="ttl" style="top:320px">Professional Presentations in Seconds with AI</div>
<div class="bt" style="left:181px;top:398px;font-size:32px;color:#4A4A62;-webkit-text-stroke:0.2px #4A4A62">Never start from a blank slide again.</div>
<div class="bt" style="left:181px;top:437px;font-size:32px;color:#4A4A62;-webkit-text-stroke:0.2px #4A4A62;line-height:27px">• Create presentation from text, YouTube, pdf<br>• No Credit Card Required<br>• No need to learn new tool<br>It is the second one line of bullet.</div>
<div class="bt" style="left:235px;top:545px;font-size:32px;color:#4A4A62;-webkit-text-stroke:0.2px #4A4A62;line-height:28px">•This is the sub bullet here.<br>•Example second line of bullet.</div></div></div>
<div class="thumb" style="top:631px" id="t4"><div class="sc"><div class="logo"><svg class="ic" width="33" height="34" viewBox="0 0 33 34"><rect x="0.5" y="1" width="31.5" height="23" rx="1.5" fill="#111"/><rect x="4.3" y="12" width="5.2" height="7.5" fill="#fff"/><rect x="13.4" y="8" width="5.2" height="11.5" fill="#fff"/><rect x="22.5" y="4" width="5.2" height="15.5" fill="#fff"/><path d="M14 23l-3.5 10M16 23v10M18 23l3.5 10" stroke="#111" stroke-width="1.8"/></svg><div class="tx">MagicSlides</div></div><div class="ttl" style="top:320px">Professional Presentations in Seconds with AI</div>
<div class="bt" style="left:181px;top:398px;font-size:33px;color:#2E2E2E;-webkit-text-stroke:0.6px #2E2E2E">Never start from a blank slide again.</div>
<div class="bt" style="left:181px;top:455px;font-size:33px;color:#2E2E2E;-webkit-text-stroke:0.6px #2E2E2E;line-height:37px">• Create presentation from text, YouTube, pdf<br>• No Credit Card Required<br>• No need to learn <span style="color:#1F5FBF;text-decoration:underline">new tool.</span></div></div></div>
<div class="thumb" style="top:768px" id="t5"><div class="sc"><div class="logo"><svg class="ic" width="33" height="34" viewBox="0 0 33 34"><rect x="0.5" y="1" width="31.5" height="23" rx="1.5" fill="#111"/><rect x="4.3" y="12" width="5.2" height="7.5" fill="#fff"/><rect x="13.4" y="8" width="5.2" height="11.5" fill="#fff"/><rect x="22.5" y="4" width="5.2" height="15.5" fill="#fff"/><path d="M14 23l-3.5 10M16 23v10M18 23l3.5 10" stroke="#111" stroke-width="1.8"/></svg><div class="tx">MagicSlides</div></div></div><svg width="73" height="48" viewBox="0 0 68 45" style="left:60px;top:34px" preserveAspectRatio="none">
<defs><linearGradient id="dg5" x1="0" y1="0" x2="0" y2="1"><stop offset="0" stop-color="#9A9A9A"/><stop offset="0.4" stop-color="#C6C6C6"/><stop offset="1" stop-color="#D0D0D0"/></linearGradient>
<filter id="bl5" x="0" y="0" width="1" height="1"><feGaussianBlur stdDeviation="0.7"/></filter><clipPath id="cl5"><rect width="68" height="45"/></clipPath></defs>
<g clip-path="url(#cl5)"><rect width="68" height="45" fill="url(#dg5)"/>
<g filter="url(#bl5)">
<ellipse cx="63" cy="6" rx="6" ry="8" fill="#6A6A6A"/>
<ellipse cx="46" cy="6" rx="12" ry="6" fill="#8A8A8A"/>
<ellipse cx="20" cy="8" rx="14" ry="5" fill="#9E9E9E"/>
<path d="M9 25Q12 21 24 21.5Q32 21.5 35 24Q36 29 33 32L31 42H29.5L29 33Q22 33.5 17 32L14.5 41H13L13.5 31Q9 29 9 25z" fill="#4A4A4A"/>
<path d="M33 26Q35 21 35.5 17Q38 15 39.5 17.5Q38.5 24 36 30z" fill="#4A4A4A"/>
<path d="M35.5 16Q31 11 30 5.5M39 16Q42 11 42.5 6" stroke="#383838" stroke-width="0.9" fill="none"/>
</g></g></svg><svg width="25" height="22" style="left:86px;top:39px" viewBox="0 0 25 22">
<defs><linearGradient id="og" x1="0" y1="0" x2="0" y2="1"><stop offset="0" stop-color="#8C8A40"/><stop offset="0.45" stop-color="#A08A48"/><stop offset="1" stop-color="#B58A45"/></linearGradient></defs>
<rect width="25" height="22" fill="url(#og)"/>
<ellipse cx="17" cy="5" rx="6" ry="4" fill="#7F9645" opacity="0.7"/>
<path d="M0 22V17Q6 16 11 18L12 22z" fill="#7A3E1A"/>
<path d="M11 21Q10.5 16 12 13Q13.5 12 15 13.5Q14.5 18 13 21z" fill="#6B3F1E"/>
<path d="M11.5 13Q7 9 6 2M14.5 13Q18 9 19 2" stroke="#6B4A25" stroke-width="0.9" fill="none"/>
<ellipse cx="12.5" cy="15" rx="1" ry="1.6" fill="#D8C098"/>
</svg></div>

<!-- scrollbar left -->
<div class="a" style="left:267px;top:198px;width:19px;height:690px;background:#F2F2F2"></div>
<div class="a" style="left:267px;top:198px;width:19px;height:19px;background:#fff;border:1px solid #8C8C8C"></div>
<svg width="10" height="5" style="left:272px;top:204px" viewBox="0 0 10 5"><path d="M0 5L5 0L10 5z" fill="#222"/></svg>
<div class="a" style="left:267px;top:217px;width:19px;height:474px;background:#fff;border:1px solid #8C8C8C"></div>

<!-- scrollbar right -->
<div class="a" style="left:1900px;top:198px;width:19px;height:690px;background:#F2F2F2"></div>
<div class="a" style="left:1900px;top:198px;width:19px;height:19px;background:#fff;border:1px solid #8C8C8C"></div>
<svg width="10" height="5" style="left:1905px;top:204px" viewBox="0 0 10 5"><path d="M0 5L5 0L10 5z" fill="#222"/></svg>
<div class="a" style="left:1900px;top:217px;width:19px;height:76px;background:#fff;border:1px solid #8C8C8C"></div>

<!-- SLIDE -->
<div class="a" style="left:415px;top:208px;width:1362px;height:700px;background:#fff;border:1px solid #C4C4C4"></div>
<div class="a" style="left:0;top:0;width:1919px;height:888px" id="mainslide">
  <div class="logo" style="left:1419px;top:266px">
    <svg class="ic" width="33" height="34" viewBox="0 0 33 34">
      <rect x="0.5" y="1" width="31.5" height="23" rx="1.5" fill="#111"/>
      <rect x="4.3" y="12" width="5.2" height="7.5" fill="#fff"/>
      <rect x="13.4" y="8" width="5.2" height="11.5" fill="#fff"/>
      <rect x="22.5" y="4" width="5.2" height="15.5" fill="#fff"/>
      <path d="M14 23l-3.5 10M16 23v10M18 23l3.5 10" stroke="#111" stroke-width="1.8"/>
    </svg>
    <div class="tx">MagicSlides</div>
  </div>
  <div class="ttl" style="left:724.5px;top:513px">Professional Presentations in Seconds with AI</div>
  <!-- highlights -->
  <div class="a" style="left:596px;top:616px;width:553px;height:37px;background:#BBBBBB"></div>
  <div class="a" style="left:608px;top:653px;width:711px;height:53px;background:#BBBBBB"></div>
  <div class="a" style="left:608px;top:706px;width:382px;height:37px;background:#BBBBBB"></div>
  <div class="a" style="left:608px;top:743px;width:404px;height:37px;background:#BBBBBB"></div>
  <div class="a" style="left:596px;top:780px;width:10px;height:63px;background:#BBBBBB"></div>
  <div class="bt" style="left:597px;top:612px">Never start from a blank slide again.</div>
  <div class="bul" style="left:598px;top:681px"></div>
  <div class="bul" style="left:598px;top:718px"></div>
  <div class="bul" style="left:598px;top:754px"></div>
  <div class="bt" style="left:616px;top:666px">Create presentation from text, YouTube, pdf</div>
  <div class="bt" style="left:616px;top:703px;letter-spacing:-0.5px">No Credit Card Required</div>
  <div class="bt" style="left:616px;top:739px">No need to learn new tool</div>
  <!-- selection frame -->
  <svg width="1919" height="888" style="left:0;top:0">
    <rect x="585.5" y="610.5" width="1021" height="185" fill="none" stroke="#505050" stroke-width="1" stroke-dasharray="2 1.2"/>
    <path d="M1096 580.5V604" stroke="#6A6A6A" stroke-width="1.3"/>
    <g fill="#fff" stroke="#636363" stroke-width="2.3">
      <circle cx="586" cy="610.5" r="5.8"/><circle cx="1096.5" cy="610.5" r="5.8"/><circle cx="1607" cy="610.5" r="5.8"/>
      <circle cx="586" cy="703" r="5.8"/><circle cx="1607" cy="703" r="5.8"/>
      <circle cx="586" cy="795.5" r="5.8"/><circle cx="1096.5" cy="795.5" r="5.8"/><circle cx="1607" cy="795.5" r="5.8"/>
    </g>
    <g>
      <path d="M1103.82 577.46A11.7 11.7 0 1 1 1107.96 567.48L1102.68 567.94A6.4 6.4 0 1 0 1100.41 573.4Z" fill="#fff" stroke="#6A6A6A" stroke-width="1.9"/>
      <path d="M1097 566.4L1115.5 566.4L1106 575.5Z" fill="#fff" stroke="#6A6A6A" stroke-width="1.7"/>
    </g>
  </svg>
</div>

<!-- TOOLTIP -->
<div class="a" style="left:302px;top:196px;width:237px;height:198px;background:#fff;border:1px solid #808080;border-radius:5px;box-shadow:2px 7px 14px rgba(0,0,0,0.17)">
  <div class="a" style="left:13px;top:8px;font-size:13px;font-weight:bold;color:#444;line-height:16px">Slide Master View</div>
  <div class="a" style="left:13px;top:32px;font-size:13px;color:#505050;line-height:17px;letter-spacing:0px">Master slides control the look of<br>your entire presentation, including<br>colors, fonts, backgrounds, effects,<br>and just about everything else.<br><br>You can insert a shape or a logo<br>on a slide master, for example, and<br>it will show up on all your slides<br>automatically.</div>
</div>
</body></html>
